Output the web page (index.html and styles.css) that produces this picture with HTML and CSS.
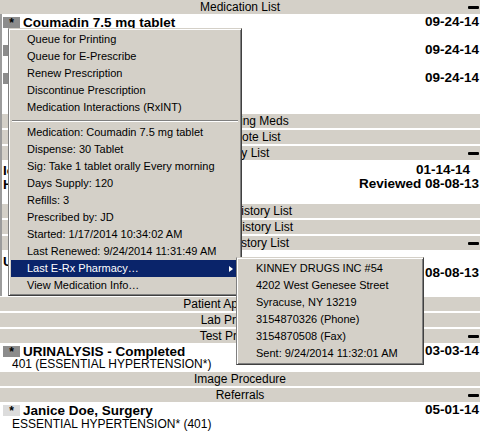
FILE: index.html
```html
<!DOCTYPE html>
<html lang="en">
<head>
    <meta charset="UTF-8">
    <title>Patient Chart</title>
    <link rel="stylesheet" href="styles.css">
</head>
<body>

<div class="chart">

    <section class="sect">
        <div class="sect-head"><span class="sect-title">Medication List</span><span class="collapse"></span></div>
        <div class="sect-body meds">
            <div class="entry">
                <div class="entry-line"><span class="badge">*</span><span class="entry-title">Coumadin 7.5 mg tablet</span><span class="entry-date">09-24-14</span></div>
                <div class="entry-sub">Take 1 tablet orally Every morning</div>
            </div>
            <div class="entry">
                <div class="entry-line"><span class="badge">*</span><span class="entry-title">Lisinopril 10 mg tablet</span><span class="entry-date">09-24-14</span></div>
                <div class="entry-sub">Take 1 tablet orally Once a day</div>
            </div>
            <div class="entry">
                <div class="entry-line"><span class="badge">*</span><span class="entry-title">Metoprolol 25 mg tablet</span><span class="entry-date">09-24-14</span></div>
                <div class="entry-sub">Take 1 tablet orally Twice a day</div>
            </div>
        </div>
    </section>

    <section class="sect">
        <div class="sect-head"><span class="sect-title">Outstanding Meds</span></div>
    </section>

    <section class="sect">
        <div class="sect-head"><span class="sect-title">Quick Note List</span></div>
    </section>

    <section class="sect">
        <div class="sect-head"><span class="sect-title">Allergy List</span><span class="collapse"></span></div>
        <div class="sect-body allergies">
            <div class="entry-line"><span class="entry-title plain">Iodine</span><span class="entry-date inset">01-14-14</span></div>
            <div class="entry-line"><span class="entry-title plain">Hives</span><span class="entry-date">Reviewed 08-08-13</span></div>
        </div>
    </section>

    <section class="sect">
        <div class="sect-head"><span class="sect-title">Medical History List</span></div>
    </section>

    <section class="sect">
        <div class="sect-head"><span class="sect-title">Surgical History List</span></div>
    </section>

    <section class="sect">
        <div class="sect-head"><span class="sect-title">Family History List</span><span class="collapse"></span></div>
        <div class="sect-body history">
            <div class="hist-row">
                <div class="hist-text">
                    <div class="entry-line"><span class="entry-title plain">Ulcer, peptic - Father</span></div>
                    <div class="entry-sub">Diagnosed age 52</div>
                </div>
                <span class="entry-date">08-08-13</span>
            </div>
        </div>
    </section>

    <section class="sect">
        <div class="sect-head"><span class="sect-title">Patient Appointments</span></div>
    </section>

    <section class="sect">
        <div class="sect-head"><span class="sect-title">Lab Procedure</span></div>
    </section>

    <section class="sect">
        <div class="sect-head"><span class="sect-title">Test Procedure</span><span class="collapse"></span></div>
        <div class="sect-body tests">
            <div class="entry-line"><span class="badge">*</span><span class="entry-title">URINALYSIS - Completed</span><span class="entry-date">03-03-14</span></div>
            <div class="entry-sub short">401 (ESSENTIAL HYPERTENSION*)</div>
        </div>
    </section>

    <section class="sect">
        <div class="sect-head"><span class="sect-title">Image Procedure</span></div>
    </section>

    <section class="sect">
        <div class="sect-head"><span class="sect-title">Referrals</span><span class="collapse"></span></div>
        <div class="sect-body referrals">
            <div class="entry-line"><span class="badge light">*</span><span class="entry-title">Janice Doe, Surgery</span><span class="entry-date">05-01-14</span></div>
            <div class="entry-sub">ESSENTIAL HYPERTENSION* (401)</div>
        </div>
    </section>

    <!-- popup menu opened on the Coumadin row -->
    <div class="frame-edge"></div>

    <div class="popup main-menu">
        <div class="menu-item">Queue for Printing</div>
        <div class="menu-item">Queue for E-Prescribe</div>
        <div class="menu-item">Renew Prescription</div>
        <div class="menu-item">Discontinue Prescription</div>
        <div class="menu-item">Medication Interactions (RxINT)</div>
        <div class="menu-sep"></div>
        <div class="menu-item">Medication: Coumadin 7.5 mg tablet</div>
        <div class="menu-item">Dispense: 30 Tablet</div>
        <div class="menu-item">Sig: Take 1 tablet orally Every morning</div>
        <div class="menu-item">Days Supply: 120</div>
        <div class="menu-item">Refills: 3</div>
        <div class="menu-item">Prescribed by: JD</div>
        <div class="menu-item">Started: 1/17/2014 10:34:02 AM</div>
        <div class="menu-item">Last Renewed: 9/24/2014 11:31:49 AM</div>
        <div class="menu-item active has-sub">Last E-Rx Pharmacy&hellip;<span class="sub-arrow"></span></div>
        <div class="menu-item">View Medication Info&hellip;</div>
    </div>

    <div class="popup sub-menu">
        <div class="menu-item">KINNEY DRUGS INC #54</div>
        <div class="menu-item">4202 West Genesee Street</div>
        <div class="menu-item">Syracuse, NY 13219</div>
        <div class="menu-item">3154870326 (Phone)</div>
        <div class="menu-item">3154870508 (Fax)</div>
        <div class="menu-item">Sent: 9/24/2014 11:32:01 AM</div>
    </div>

</div>

</body>
</html>
```

FILE: styles.css
```css
body {
    margin: 0;
    padding: 0;
    background-color: #fff;
    color: #000;
    font-family: "Liberation Sans", Arial, sans-serif;
}
.chart {
    position: relative;
    width: 480px;
    height: 440px;
    overflow: hidden;
}
.sect + .sect {
    margin-top: 2px;
}
.sect-head {
    display: grid;
    grid-template-columns: 1fr auto 1fr;
    align-items: center;
    height: 14px;
    line-height: 14px;
    font-size: 12px;
    background-color: #d4d0c8;
}
.sect-title {
    grid-column: 2;
    white-space: nowrap;
}
.collapse {
    grid-column: 3;
    justify-self: end;
    width: 11px;
    height: 3px;
    margin-right: 1px;
    border-radius: 1px;
    background-color: #000;
}
/* section contents */
.meds {
    height: 97px;
    padding-top: 1px;
}
.allergies {
    height: 39px;
    padding-top: 3px;
}
.history {
    height: 41px;
    padding-top: 4px;
}
.tests {
    height: 26px;
    padding-top: 1px;
}
.referrals {
    padding-top: 1px;
}
.entry-line {
    display: flex;
    align-items: center;
    height: 14px;
    font-size: 13.5px;
    font-weight: bold;
    white-space: nowrap;
}
.entry-title {
    flex: 1;
}
.entry-title.plain {
    padding-left: 3px;
}
.entry-date {
    padding-right: 1px;
    font-size: 13.5px;
    font-weight: bold;
    line-height: 14px;
    white-space: nowrap;
}
.entry-date.inset {
    padding-right: 10px;
}
.entry-sub {
    height: 14px;
    padding-left: 12px;
    font-size: 12px;
    line-height: 14px;
    white-space: nowrap;
}
.entry-sub.short {
    height: 13px;
    line-height: 13px;
}
.badge {
    width: 17px;
    height: 11px;
    margin: 0 3px;
    font-size: 12px;
    line-height: 13px;
    text-align: center;
    background-color: #8c8c8c;
}
.badge.light {
    background-color: #dcdcdc;
}
.hist-row {
    display: flex;
    align-items: flex-end;
}
.hist-text {
    flex: 1;
}
.hist-text .entry-sub {
    height: 12px;
    line-height: 12px;
}
/* popup menus */
.frame-edge {
    position: absolute;
    top: 14px;
    left: 0;
    width: 2px;
    height: 282px;
    background-color: #9c9c9c;
}
.popup {
    position: absolute;
    box-sizing: border-box;
    padding: 3px;
    background-color: #d4d0c8;
    border: 1px solid;
    border-color: #d4d0c8 #404040 #404040 #808080;
    box-shadow: inset 1px 1px 0 #fff, inset -1px -1px 0 #808080;
    font-size: 11px;
}
.main-menu {
    top: 28px;
    left: 8px;
    width: 234px;
    height: 268px;
    padding: 2px;
}
.sub-menu {
    top: 257px;
    left: 236px;
    width: 188px;
    height: 108px;
    padding: 2px;
}
.menu-item {
    height: 17px;
    line-height: 17px;
    padding-left: 16px;
    white-space: nowrap;
}
.sub-menu .menu-item {
    padding-left: 17px;
}
.menu-item.active {
    background-color: #0a246a;
    color: #fff;
}
.has-sub {
    display: flex;
    align-items: center;
}
.sub-arrow {
    margin-left: auto;
    margin-right: 6px;
    width: 0;
    height: 0;
    border-top: 3.5px solid transparent;
    border-bottom: 3.5px solid transparent;
    border-left: 4px solid #fff;
}
.menu-sep {
    height: 2px;
    margin: 4px 1px 2px;
    border-top: 1px solid #808080;
    border-bottom: 1px solid #fff;
    box-sizing: border-box;
}
```
